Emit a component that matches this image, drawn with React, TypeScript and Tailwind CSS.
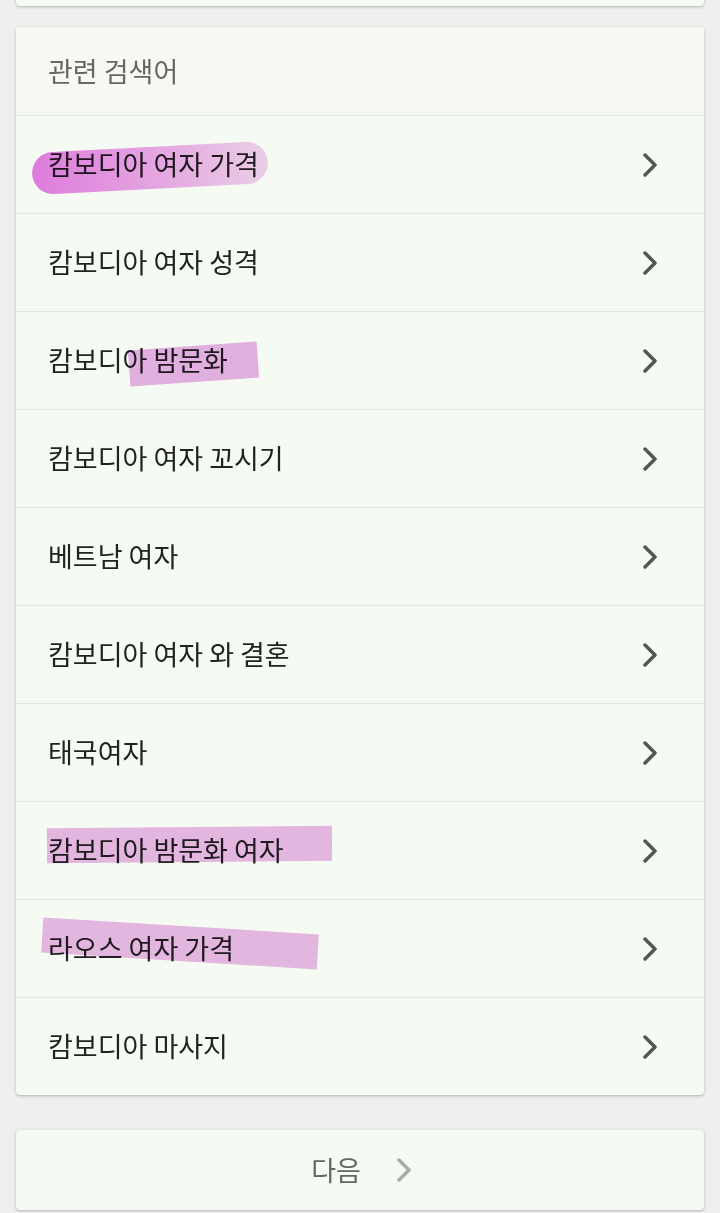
import React from "react";

const rows = [
  "캄보디아 여자 가격",
  "캄보디아 여자 성격",
  "캄보디아 밤문화",
  "캄보디아 여자 꼬시기",
  "베트남 여자",
  "캄보디아 여자 와 결혼",
  "태국여자",
  "캄보디아 밤문화 여자",
  "라오스 여자 가격",
  "캄보디아 마사지",
];

const Chevron = ({ color }: { color: string }) => (
  <svg width="16" height="24" viewBox="0 0 16 24" fill="none">
    <polyline
      points="3,2 13,12 3,22"
      stroke={color}
      strokeWidth="3.5"
      strokeLinecap="round"
      strokeLinejoin="round"
    />
  </svg>
);

// marker strokes drawn over the rows
const Highlight = ({ index }: { index: number }) => {
  if (index === 0)
    return (
      <div className="pointer-events-none absolute left-[16px] top-[31px] h-[42px] w-[236px] -rotate-[3deg] rounded-full bg-gradient-to-r from-[#e77ee7] via-[#eea6ec] to-[#f3d3f1] mix-blend-multiply" />
    );
  if (index === 2)
    return (
      <div className="pointer-events-none absolute left-[113px] top-[34px] h-[36px] w-[129px] -rotate-[4deg] bg-[#ebb3ea] mix-blend-multiply" />
    );
  if (index === 7)
    return (
      <div className="pointer-events-none absolute left-[31px] top-[25px] h-[35px] w-[285px] -rotate-[0.5deg] bg-[#ecbaea] mix-blend-multiply" />
    );
  if (index === 8)
    return (
      <div className="pointer-events-none absolute left-[26px] top-[26px] h-[35px] w-[276px] rotate-[3.5deg] bg-[#ecbaea] mix-blend-multiply" />
    );
  return null;
};

export default function App() {
  return (
    <div
      className="min-h-[1213px] w-[720px] overflow-hidden bg-[#efefef] px-4"
      style={{ fontFamily: '"Noto Sans CJK KR", "Noto Sans", sans-serif' }}
    >
      {/* previous card, cut off at the top */}
      <div className="-mt-[20px] h-[26px] rounded-b-[4px] bg-[#f5faf3] shadow-[0_1px_3px_rgba(0,0,0,0.25)]" />

      {/* related searches */}
      <div className="mt-[21px] overflow-hidden rounded-[4px] bg-[#f5faf3] shadow-[0_1px_3px_rgba(0,0,0,0.25)]">
        <div className="flex h-[88px] items-center bg-[#f6f8f3] px-8 text-[27px] text-[#666666]">
          관련 검색어
        </div>
        {rows.map((label, i) => (
          <div
            key={i}
            className="relative flex h-[98px] items-center justify-between border-t border-[#e4e8e2] pl-8 pr-[46px]"
          >
            <span className="text-[27px] text-[#222222]">{label}</span>
            <Chevron color="#555555" />
            <Highlight index={i} />
          </div>
        ))}
      </div>

      {/* next page */}
      <div className="mt-[35px] flex h-[80px] items-center justify-center gap-[35px] rounded-[4px] bg-[#f5faf3] pl-[3px] shadow-[0_1px_3px_rgba(0,0,0,0.25)]">
        <span className="text-[27px] text-[#666666]">다음</span>
        <Chevron color="#aaaaaa" />
      </div>
    </div>
  );
}
